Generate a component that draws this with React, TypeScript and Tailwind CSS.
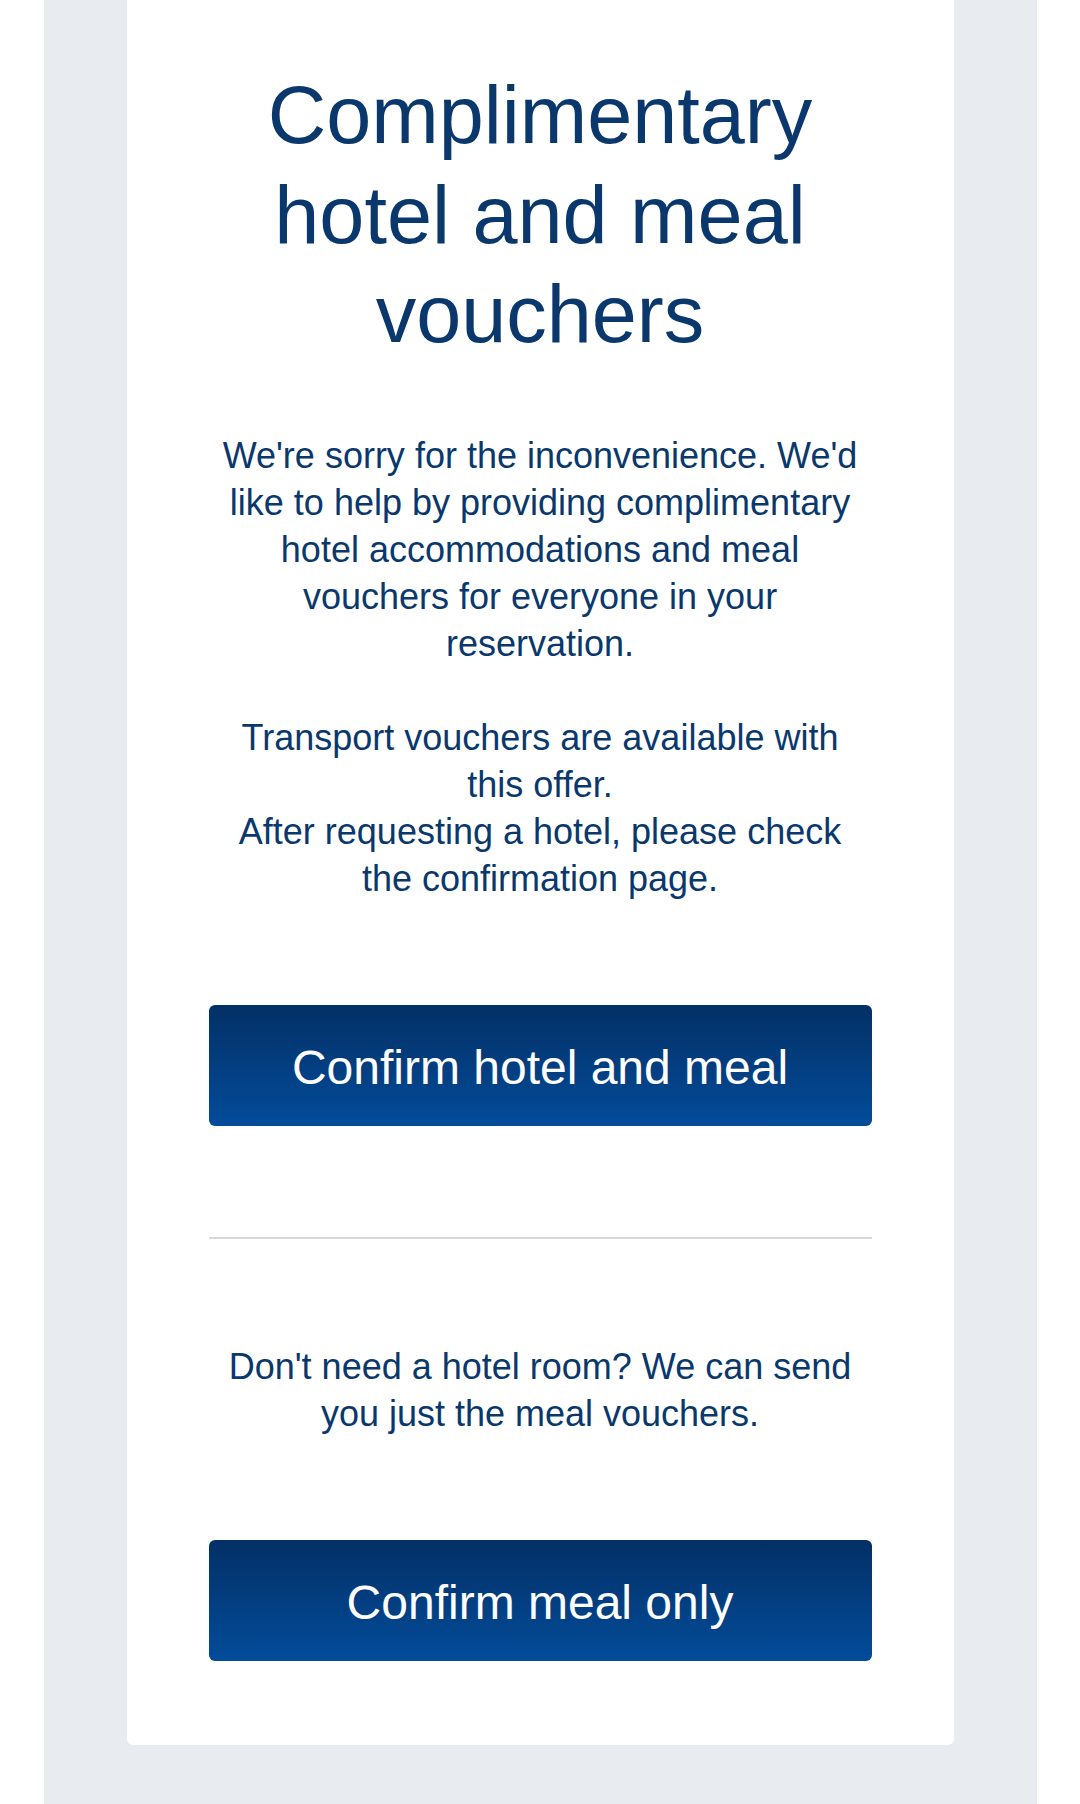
const navy = "text-[#0a386d]";

function ConfirmButton({ label }: { label: string }) {
  return (
    <button
      type="button"
      className="flex h-[121px] w-full items-center justify-center rounded-[6px] bg-gradient-to-b from-[#033066] to-[#024c9a] pt-[5px] text-[48px] leading-none text-white"
    >
      {label}
    </button>
  );
}

function Lines({ lines, className }: { lines: string[]; className?: string }) {
  return (
    <p className={`text-center text-[36px] leading-[47px] ${navy} ${className ?? ""}`}>
      {lines.map((line, i) => (
        <span key={i} className="block whitespace-nowrap">
          {line}
        </span>
      ))}
    </p>
  );
}

export default function App() {
  return (
    <div className="flex min-h-[1804px] justify-center bg-white font-['Liberation_Sans',Arial,sans-serif]">
      <div className="flex w-[993px] justify-center bg-[#e8ebef]">
        <div className="h-fit w-[827px] rounded-b-[6px] bg-white px-[82px] pb-[84px] pt-[66px]">
          <h1 className={`text-center text-[81px] font-normal leading-[99.5px] ${navy}`}>
            <span className="block whitespace-nowrap">Complimentary</span>
            <span className="block whitespace-nowrap">hotel and meal</span>
            <span className="block whitespace-nowrap">vouchers</span>
          </h1>

          <Lines
            className="mt-[67px]"
            lines={[
              "We're sorry for the inconvenience. We'd",
              "like to help by providing complimentary",
              "hotel accommodations and meal",
              "vouchers for everyone in your",
              "reservation.",
            ]}
          />

          <Lines
            className="mt-[47px]"
            lines={[
              "Transport vouchers are available with",
              "this offer.",
              "After requesting a hotel, please check",
              "the confirmation page.",
            ]}
          />

          <div className="mt-[103px]">
            <ConfirmButton label="Confirm hotel and meal" />
          </div>

          <div className="mt-[111px] h-[2px] bg-[#d6dadf]" />

          <Lines
            className="mt-[104px]"
            lines={["Don't need a hotel room? We can send", "you just the meal vouchers."]}
          />

          <div className="mt-[103px]">
            <ConfirmButton label="Confirm meal only" />
          </div>
        </div>
      </div>
    </div>
  );
}
